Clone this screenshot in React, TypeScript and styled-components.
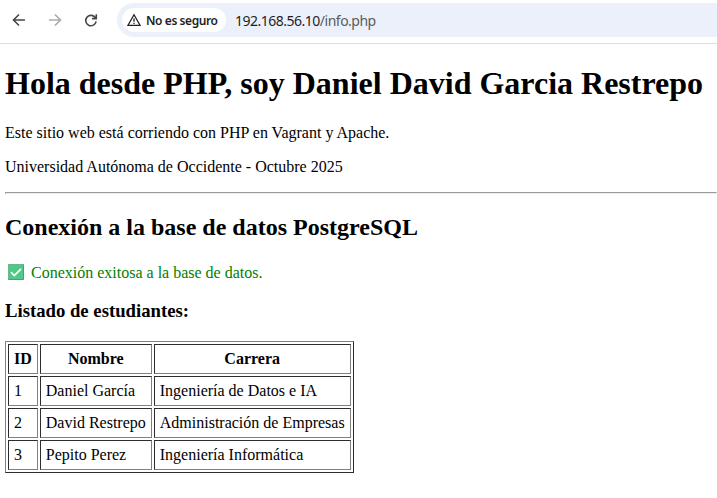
import React from 'react';
import styled, { createGlobalStyle } from 'styled-components';

const Global = createGlobalStyle`
  html, body { margin: 0; background: #fff; overflow: hidden; }
  body { font-family: "Liberation Serif", "Times New Roman", serif; font-size: 16px; color: #000; }
`;
const Toolbar = styled.header`
  display: flex; align-items: center; height: 44px; box-sizing: border-box;
  border-bottom: 1px solid #dedfe1; background: #fff;
`;
const NavIcon = styled.svg<{ $muted?: boolean }>`
  flex: none; width: 16px; height: 16px; margin-left: 11px; margin-right: 9px; margin-top: -3px;
  fill: none; stroke: ${p => (p.$muted ? '#a9abae' : '#474747')}; stroke-width: 1.6;
`;
const AddressBar = styled.div`
  display: flex; align-items: center; flex: 1; height: 34px; margin: -3px 0 0 9px; padding-left: 5px;
  border-radius: 17px 0 0 17px; background: #ebf0fa;
`;
const Chip = styled.div`
  display: flex; align-items: center; gap: 5px; height: 24px; width: 104px; box-sizing: border-box; padding-left: 5px;
  border-radius: 12px; background: #fff; font: 600 12px "Noto Sans", sans-serif; letter-spacing: -.42px;
  color: #1f1f1f; white-space: nowrap;
`;
const Url = styled.span`
  margin-left: 9px; font: 14px "Noto Sans", sans-serif; letter-spacing: -.5px; color: #1f1f1f;
  span { color: #5a5c60; }
`;
const Content = styled.main` padding: 0 0 0 5px; `;
const Title = styled.h1` margin: 21px 0 22px; font-size: 32px; line-height: 37px; white-space: nowrap; `;
const Text = styled.p` margin: 0 0 16px; line-height: 18px; `;
const Rule = styled.hr` margin: 0; `;
const Heading = styled.h2` margin: 20px 0 23px; font-size: 24px; line-height: 27px; `;
const Status = styled.p` display: flex; align-items: center; gap: 6px; margin: 0 0 18px 2px; line-height: 18px; color: green; `;
const Subheading = styled.h3` margin: 0 0 20px; font-size: 18.72px; line-height: 21px; `;
const Table = styled.table`
  border: 1px solid; border-color: #808080 #2c2c2c #2c2c2c #808080; border-spacing: 2px; border-collapse: separate;
  th, td {
    border: 1px solid; border-color: #2c2c2c #808080 #808080 #2c2c2c;
    padding: 5px; line-height: 18px; white-space: nowrap;
  }
`;
const students = [
  [1, 'Daniel García', 'Ingeniería de Datos e IA'],
  [2, 'David Restrepo', 'Administración de Empresas'],
  [3, 'Pepito Perez', 'Ingeniería Informática'],
];

export default function App() {
  return (
    <>
      <Global />
      <Toolbar>
        <NavIcon viewBox="0 0 16 16"><path d="M14 8H3M8 2.500 2.500 8 8 13.500" /></NavIcon>
        <NavIcon viewBox="0 0 16 16" $muted><path d="M2 8h11M8 2.500 13.500 8 8 13.500" /></NavIcon>
        <NavIcon viewBox="0 0 16 16"><path d="M12.600 6.200A5.200 5.200 0 1 0 13.100 9.300M13.300 2.300v4.300H9M12.600 6.200 10.600 4" /></NavIcon>
        <AddressBar>
          <Chip>
            <svg width="14" height="14" viewBox="0 0 14 14" fill="none" stroke="#1f1f1f" strokeWidth="1.3"><path d="M7 1.800 13 12.300H1ZM7 5.500v3.200M7 9.700V11" /></svg>
            No es seguro
          </Chip>
          <Url>192.168.56.10<span>/info.php</span></Url>
        </AddressBar>
      </Toolbar>
      <Content>
        <Title>Hola desde PHP, soy Daniel David Garcia Restrepo</Title>
        <Text>Este sitio web está corriendo con PHP en Vagrant y Apache.</Text>
        <Text>Universidad Autónoma de Occidente - Octubre 2025</Text>
        <Rule />
        <Heading>Conexión a la base de datos PostgreSQL</Heading>
        <Status>
          <svg width="18" height="18" viewBox="0 0 18 18"><rect x="1" y="0" width="16" height="16" rx=".8" fill="#4bcb85" /><path d="M1.500 15.500V.5h15" fill="none" stroke="#65b98b" /><path d="M1.500 15.500h15V.5" fill="none" stroke="#5b987a" /><path d="m4 8.200 3.300 3.300L14 4.800" fill="none" stroke="#fff" strokeWidth="1.700" /></svg>
          <span>Conexión exitosa a la base de datos.</span>
        </Status>
        <Subheading>Listado de estudiantes:</Subheading>
        <Table>
          <thead><tr><th>ID</th><th>Nombre</th><th>Carrera</th></tr></thead>
          <tbody>{students.map(r => <tr key={r[0]}>{r.map(c => <td key={c}>{c}</td>)}</tr>)}</tbody>
        </Table>
      </Content>
    </>
  );
}
